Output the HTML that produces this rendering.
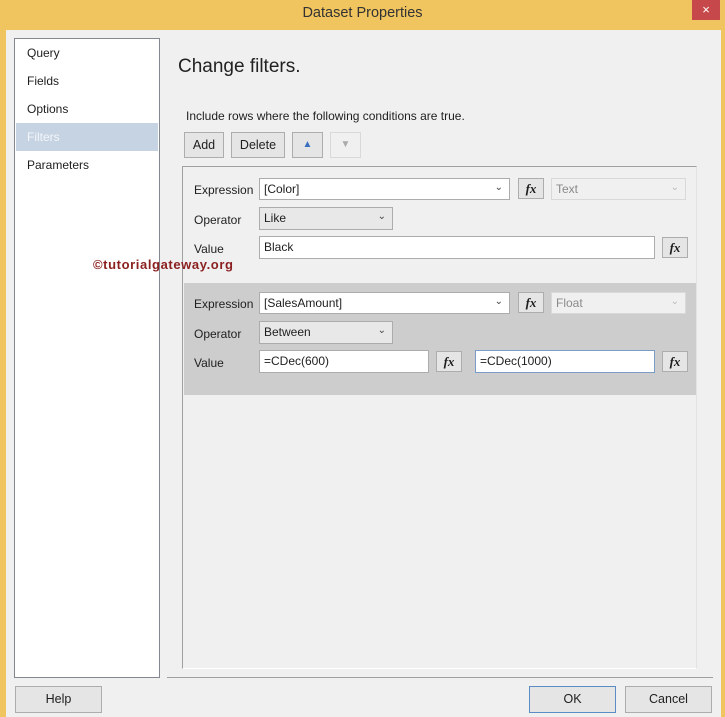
<!DOCTYPE html>
<html><head><style>
*{box-sizing:border-box;margin:0;padding:0}
body{width:725px;height:717px;position:relative;overflow:hidden;background:#f0c45e;font-family:"Liberation Sans",sans-serif;font-size:12px;color:#1e1e1e}
.a{position:absolute}
.win{left:6px;top:30px;width:715px;height:687px;background:#f0f0f0}
.btn{position:absolute;background:#e5e5e5;border:1px solid #adadad;text-align:center;font-size:12.5px}
.inp{position:absolute;background:#fff;border:1px solid #acacac;padding:3px 0 0 4px;font-size:12px}
.dis{position:absolute;background:#f0f0f0;border:1px solid #d9d9d9;color:#8a8a8a;padding:3px 0 0 4px}
.sel{position:absolute;background:#e8e8e8;border:1px solid #acacac;padding:3px 0 0 4px}
.chev{position:absolute;right:6px;top:3px;font-size:10px;color:#444}
.fx{position:absolute;width:26px;height:21px;background:#e5e5e5;border:1px solid #adadad;font-family:"Liberation Serif",serif;font-style:italic;font-weight:bold;font-size:13px;text-align:center;line-height:19px}
.lbl{position:absolute;font-size:12px}
</style></head><body>
<div class="a" style="left:0;top:5px;width:725px;text-align:center;font-size:14.5px;color:#333">Dataset Properties</div>
<div class="a" style="left:692px;top:0;width:28px;height:20px;background:#c7484a;color:#fff;text-align:center;font-size:13px;line-height:20px">×</div>
<div class="a win"></div>
<div class="a" style="left:14px;top:38px;width:146px;height:640px;background:#fff;border:1px solid #828790"></div>
<div class="a" style="left:16px;top:123px;width:142px;height:28px;background:#c5d3e2"></div>
<div class="a" style="left:27px;top:39px;line-height:28px;font-size:12px">Query<br>Fields<br>Options<br><span style="color:#f4f6fa">Filters</span><br>Parameters</div>
<div class="a" style="left:178px;top:56px;font-size:19px;color:#222">Change filters.</div>
<div class="a" style="left:186px;top:109px;font-size:12px">Include rows where the following conditions are true.</div>
<div class="btn" style="left:184px;top:132px;width:40px;height:26px;line-height:24px">Add</div>
<div class="btn" style="left:231px;top:132px;width:54px;height:26px;line-height:24px">Delete</div>
<div class="btn" style="left:292px;top:132px;width:31px;height:26px;line-height:24px;color:#3a6fc0;font-size:10px">▲</div>
<div class="btn" style="left:330px;top:132px;width:31px;height:26px;line-height:24px;background:#f0f0f0;border-color:#d9d9d9;color:#aaa;font-size:10px">▼</div>
<div class="a" style="left:182px;top:166px;width:515px;height:503px;background:#f0f0f0;border:1px solid #a0a0a0;border-right-color:#e3e3e3;border-bottom-color:#fff"></div>
<div class="a" style="left:184px;top:283px;width:512px;height:112px;background:#cdcdcd"></div>
<div class="lbl" style="left:194px;top:183px">Expression</div>
<div class="inp" style="left:259px;top:178px;width:251px;height:22px">[Color]<span class="chev">⌄</span></div>
<div class="fx" style="left:518px;top:178px">fx</div>
<div class="dis" style="left:551px;top:178px;width:135px;height:22px">Text<span class="chev" style="color:#bbb">⌄</span></div>
<div class="lbl" style="left:194px;top:213px">Operator</div>
<div class="sel" style="left:259px;top:207px;width:134px;height:23px">Like<span class="chev">⌄</span></div>
<div class="lbl" style="left:194px;top:242px">Value</div>
<div class="inp" style="left:259px;top:236px;width:396px;height:23px">Black</div>
<div class="fx" style="left:662px;top:237px">fx</div>
<div class="a" style="left:93px;top:257px;font-weight:bold;font-size:13px;letter-spacing:0.6px;color:#8b2020">©tutorialgateway.org</div>
<div class="lbl" style="left:194px;top:297px">Expression</div>
<div class="inp" style="left:259px;top:292px;width:251px;height:22px">[SalesAmount]<span class="chev">⌄</span></div>
<div class="fx" style="left:518px;top:292px">fx</div>
<div class="dis" style="left:551px;top:292px;width:135px;height:22px">Float<span class="chev" style="color:#bbb">⌄</span></div>
<div class="lbl" style="left:194px;top:327px">Operator</div>
<div class="sel" style="left:259px;top:321px;width:134px;height:23px">Between<span class="chev">⌄</span></div>
<div class="lbl" style="left:194px;top:356px">Value</div>
<div class="inp" style="left:259px;top:350px;width:170px;height:23px">=CDec(600)</div>
<div class="fx" style="left:436px;top:351px">fx</div>
<div class="inp" style="left:475px;top:350px;width:180px;height:23px;border-color:#7a9cc6">=CDec(1000)</div>
<div class="fx" style="left:662px;top:351px">fx</div>
<div class="a" style="left:167px;top:677px;width:546px;height:1px;background:#a0a0a0"></div>
<div class="btn" style="left:15px;top:686px;width:87px;height:27px;line-height:25px">Help</div>
<div class="btn" style="left:529px;top:686px;width:87px;height:27px;line-height:25px;border-color:#5b8cc4">OK</div>
<div class="btn" style="left:625px;top:686px;width:87px;height:27px;line-height:25px">Cancel</div>
</body></html>
